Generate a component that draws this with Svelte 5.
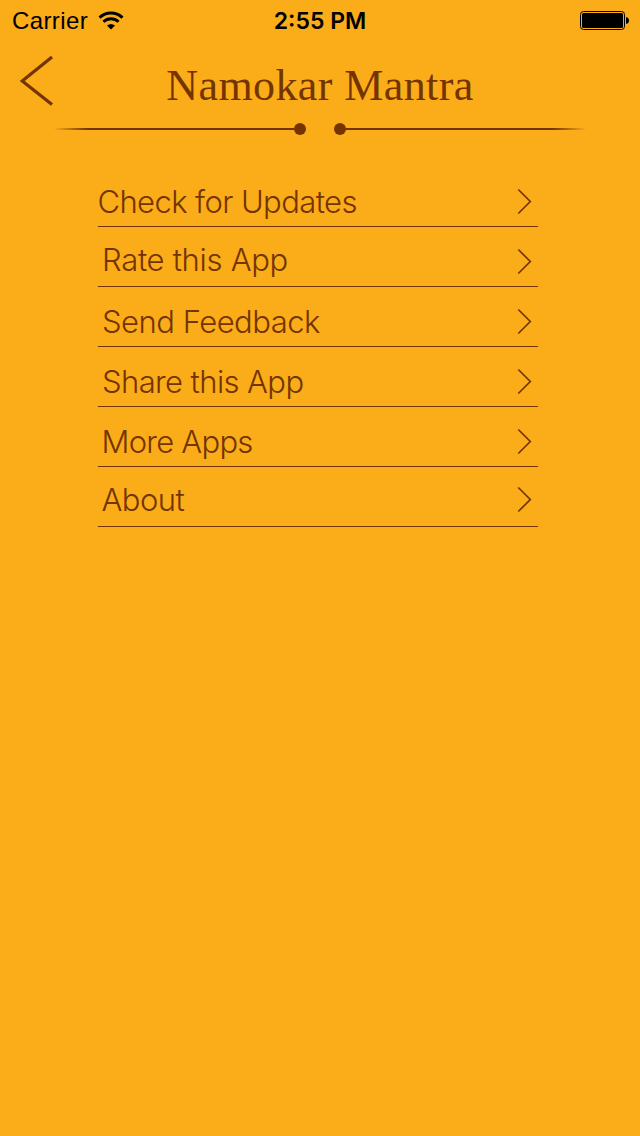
<script>
  const items = [
    { label: 'Check for Updates', indent: -0.5, lift: 0, tracking: -0.6 },
    { label: 'Rate this App', indent: 4, lift: 2, tracking: -0.3 },
    { label: 'Send Feedback', indent: 4, lift: 0, tracking: -0.5 },
    { label: 'Share this App', indent: 4, lift: 0, tracking: -0.6 },
    { label: 'More Apps', indent: 3.5, lift: 0, tracking: -0.75 },
    { label: 'About', indent: 3.5, lift: 2, tracking: -0.55 }
  ];
  const arrowLift = [0, 0, 0, 0, 0, 2];
</script>

<div class="screen">
  <header class="status">
    <div class="network">
      <span class="carrier">Carrier</span>
      <svg class="wifi" width="26" height="20" viewBox="0 0 26 20" aria-hidden="true">
        <path d="M1.500 6.600 C8 0.400 18 0.400 24.500 6.600" fill="none" stroke="#000" stroke-width="2.900" />
        <path d="M5.400 10.700 C9.800 6.700 16.200 6.700 20.600 10.700" fill="none" stroke="#000" stroke-width="2.900" />
        <path d="M9 14.400 Q13 11.400 17 14.400 L13 18.500 Z" fill="#000" />
      </svg>
    </div>
    <span class="time">2:55 PM</span>
    <svg class="battery" width="50" height="20" viewBox="0 0 50 20" aria-hidden="true">
      <rect x="0.5" y="0.5" width="44" height="18" rx="3" fill="none" stroke="#000" />
      <rect x="2" y="2" width="41" height="15" rx="1.5" fill="#000" />
      <path d="M46 6 Q49 6.500 49 9.500 Q49 12.500 46 13 Z" fill="#000" />
    </svg>
  </header>

  <div class="titlebar">
    <svg class="back" width="34" height="52" viewBox="0 0 34 52" aria-hidden="true">
      <path d="M32 2 L2.200 26 L32 49.500" fill="none" stroke="#733400" stroke-width="3.200" />
    </svg>
    <h1>Namokar Mantra</h1>
    <span></span>
  </div>

  <div class="divider">
    <i class="line left"></i><i class="dot"></i>
    <i class="gap"></i>
    <i class="dot"></i><i class="line right"></i>
  </div>

  <ul>
    {#each items as item, i}
      <li>
        <span
          class="label"
          style="margin-left: {item.indent}px; padding-bottom: {item.lift}px; letter-spacing: {item.tracking}px"
          >{item.label}</span
        >
        <svg
          style="margin-bottom: {arrowLift[i]}px"
          width="16"
          height="28"
          viewBox="0 0 16 28"
          aria-hidden="true"
        >
          <path d="M1.300 1.500 L13.300 13.500 L1.300 25.500" fill="none" stroke="#733400" stroke-width="1.700" />
        </svg>
      </li>
    {/each}
  </ul>
</div>

<style>
  .screen {
    box-sizing: border-box;
    width: 640px;
    height: 1136px;
    background: #fbac19;
    color: #733400;
    font-family: Inter, 'Liberation Sans', sans-serif;
    overflow: hidden;
  }
  .status {
    display: grid;
    grid-template-columns: 1fr auto 1fr;
    align-items: center;
    height: 42px;
    padding: 0 10px 0 12px;
    color: #000;
    font-size: 23px;
    line-height: 42px;
  }
  .network {
    display: flex;
    align-items: center;
    gap: 10px;
  }
  .carrier {
    font-family: 'Liberation Sans', Arial, sans-serif;
    font-size: 24px;
    letter-spacing: 0.4px;
  }
  .time {
    margin-left: -2px;
    font-weight: 600;
  }
  .battery {
    justify-self: end;
  }
  .titlebar {
    display: grid;
    grid-template-columns: 34px 1fr 34px;
    height: 80px;
    padding: 0 20px;
  }
  .back {
    margin-top: 13px;
  }
  h1 {
    margin: 0;
    padding-top: 15px;
    text-align: center;
    font: 400 44px/58px 'Liberation Serif', serif;
    letter-spacing: 0.4px;
    white-space: nowrap;
  }
  .divider {
    display: flex;
    align-items: center;
    justify-content: center;
    height: 14px;
  }
  .line {
    width: 240px;
    height: 2px;
  }
  .left {
    background: linear-gradient(to left, #733400 86%, transparent);
  }
  .right {
    background: linear-gradient(to right, #733400 86%, transparent);
  }
  .dot {
    width: 12px;
    height: 12px;
    border-radius: 50%;
    background: #733400;
  }
  .gap {
    width: 28px;
  }
  ul {
    width: 440px;
    margin: 31px 0 0 98px;
    padding: 0;
    list-style: none;
  }
  li {
    box-sizing: border-box;
    display: flex;
    align-items: flex-end;
    justify-content: space-between;
    height: 60px;
    padding: 0 5px 10px 0;
    border-bottom: 1px solid #733400;
  }
  .label {
    margin-bottom: -1px;
    font-size: 31px;
    font-weight: 300;
    line-height: 30px;
    white-space: nowrap;
  }
</style>
